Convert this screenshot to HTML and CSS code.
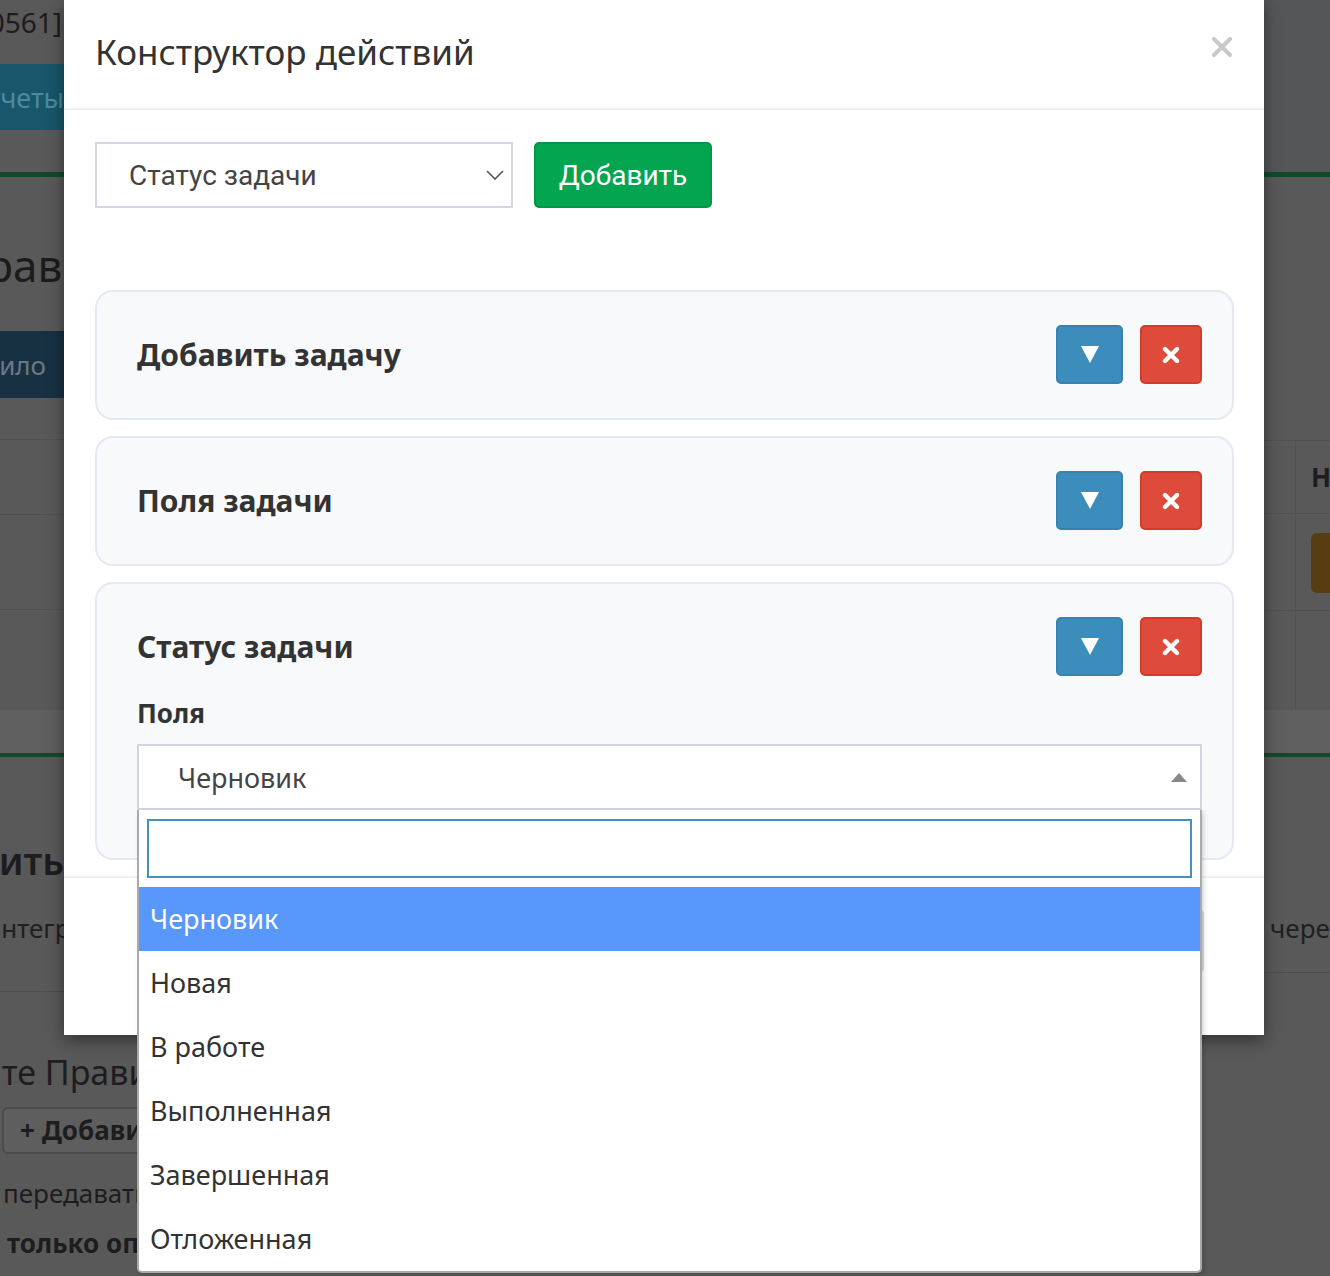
FILE: index.html
```html
<!DOCTYPE html>
<html lang="ru">
<head>
    <meta charset="UTF-8">
    <meta name="viewport" content="width=device-width, initial-scale=1.0">
    <title>Конструктор действий</title>
    <link rel="stylesheet" href="styles.css">
</head>
<body>
    <div class="page">
        <div class="side left">
            <div class="crumb cut">Задача [40561]</div>
            <div class="topnav"><div class="cut">Отчеты</div></div>
            <div class="green-rule"></div>
            <div class="page-title cut"><span>Правила</span></div>
            <div class="navy-btn"><div class="cut">Добавить правило</div></div>
            <div class="rows">
                <div class="row r1"></div>
                <div class="row r2"></div>
                <div class="row r3"></div>
                <div class="band"></div>
            </div>
            <div class="green-rule thin"></div>
            <div class="sub-title cut">Добавить</div>
            <div class="note"><span>интеграции</span></div>
            <div class="hr"></div>
            <div class="hint-title"><span>Настройте Правила</span></div>
            <div class="outline-btn">+ Добавить</div>
            <div class="small">передавать</div>
            <div class="small strong">только опубликованные</div>
        </div>
        <div class="side right">
            <div class="dark-top"></div>
            <div class="green-rule"></div>
            <div class="rtable">
                <div class="rrow head"><div class="cell"></div><div class="cell">Н</div></div>
                <div class="rrow tall"><div class="cell"></div><div class="cell"><span class="orange-btn"></span></div></div>
                <div class="rrow last"><div class="cell"></div><div class="cell"></div></div>
                <div class="band"></div>
            </div>
            <div class="green-rule thin"></div>
            <div class="note right-note">через</div>
            <div class="hr right-hr"></div>
        </div>
    </div>

    <div class="modal">
        <div class="modal-header">
            <h4 class="modal-title">Конструктор действий</h4>
            <span class="close">
                <svg width="20" height="20" viewBox="0 0 20 20"><path d="M2 2 L18 18 M18 2 L2 18" stroke="#c8c8c8" stroke-width="4" stroke-linecap="round"/></svg>
            </span>
        </div>
        <div class="modal-body">
            <div class="add-row">
                <div class="plain-select">
                    <span>Статус задачи</span>
                    <svg width="18" height="10" viewBox="0 0 18 10"><path d="M1 1 L9 9 L17 1" fill="none" stroke="#555" stroke-width="1.6"/></svg>
                </div>
                <button class="btn-add">Добавить</button>
            </div>

            <div class="actions">
                <div class="action-card">
                    <div class="card-head">
                        <span class="card-title">Добавить задачу</span>
                        <div class="card-tools">
                            <button class="tool blue"><svg width="18" height="17" viewBox="0 0 18 17"><polygon points="0,0 18,0 9,17" fill="#fff"/></svg></button>
                            <button class="tool red"><svg width="18" height="18" viewBox="0 0 18 18"><path d="M3 3 L15 15 M15 3 L3 15" stroke="#fff" stroke-width="4.4" stroke-linecap="round"/></svg></button>
                        </div>
                    </div>
                </div>
                <div class="action-card">
                    <div class="card-head">
                        <span class="card-title">Поля задачи</span>
                        <div class="card-tools">
                            <button class="tool blue"><svg width="18" height="17" viewBox="0 0 18 17"><polygon points="0,0 18,0 9,17" fill="#fff"/></svg></button>
                            <button class="tool red"><svg width="18" height="18" viewBox="0 0 18 18"><path d="M3 3 L15 15 M15 3 L3 15" stroke="#fff" stroke-width="4.4" stroke-linecap="round"/></svg></button>
                        </div>
                    </div>
                </div>
                <div class="action-card open">
                    <div class="card-head">
                        <span class="card-title">Статус задачи</span>
                        <div class="card-tools">
                            <button class="tool blue"><svg width="18" height="17" viewBox="0 0 18 17"><polygon points="0,0 18,0 9,17" fill="#fff"/></svg></button>
                            <button class="tool red"><svg width="18" height="18" viewBox="0 0 18 18"><path d="M3 3 L15 15 M15 3 L3 15" stroke="#fff" stroke-width="4.4" stroke-linecap="round"/></svg></button>
                        </div>
                    </div>
                    <div class="field-label">Поля</div>
                    <div class="s2">
                        <div class="s2-selection">
                            <span>Черновик</span>
                            <svg width="16" height="9" viewBox="0 0 16 9"><polygon points="0,9 16,9 8,0" fill="#888"/></svg>
                        </div>
                        <div class="s2-dropdown">
                            <div class="s2-search"><input type="text"></div>
                            <ul class="s2-results">
                                <li class="active">Черновик</li>
                                <li>Новая</li>
                                <li>В работе</li>
                                <li>Выполненная</li>
                                <li>Завершенная</li>
                                <li>Отложенная</li>
                            </ul>
                        </div>
                    </div>
                </div>
            </div>
        </div>
        <div class="modal-footer">
            <button class="btn-save">Сохранить</button>
        </div>
    </div>
</body>
</html>
```
FILE: styles.css
```css
*,
*:before,
*:after {
    margin: 0;
    padding: 0;
    box-sizing: border-box;
}

body {
    font-family: "Noto Sans", sans-serif;
    background-color: #595959;
    height: 1276px;
    overflow: hidden;
    color: #1d1d1f;
}

/* page behind the overlay */

.page {
    display: flex;
    justify-content: space-between;
}

.side {
    overflow: hidden;
}

.side.left {
    width: 140px;
}

.side.right {
    width: 66px;
}

.cut {
    width: 64px;
    display: flex;
    justify-content: flex-end;
    white-space: nowrap;
}

.crumb {
    height: 44px;
    align-items: center;
    font-size: 28px;
    padding-right: 2px;
}

.topnav {
    margin-top: 20px;
    height: 66px;
    background: #17566b;
    display: flex;
    align-items: center;
    color: #4b8b9e;
    font-size: 27px;
}

.green-rule {
    margin-top: 42px;
    height: 5px;
    background: #0f4b29;
}

.green-rule.thin {
    margin-top: 0;
    height: 4px;
}

.page-title {
    margin-top: 58px;
    font-size: 44px;
    line-height: 60px;
    color: #1b1b1b;
}

.page-title span {
    margin-right: -76px;
}

.navy-btn {
    margin-top: 36px;
    height: 67px;
    background: #173143;
    display: flex;
    align-items: center;
    color: #697985;
    font-size: 26px;
}

.navy-btn .cut {
    padding-right: 18px;
}

.rows {
    margin-top: 41px;
}

.row {
    border-top: 1px solid #515151;
}

.r1 { height: 75px; }
.r2 { height: 95px; }
.r3 { height: 101px; }

.band {
    height: 43px;
    background: #5f5f5f;
}

.sub-title {
    margin-top: 78px;
    font-size: 38px;
    line-height: 50px;
    font-weight: 600;
}

.note {
    margin-top: 25px;
    font-size: 26px;
    line-height: 36px;
    white-space: nowrap;
    color: #202022;
}

.note span {
    margin-left: -15px;
}

.hr {
    margin-top: 45px;
    border-top: 1px solid #4e4e4e;
}

.hint-title {
    margin-top: 57px;
    font-size: 34px;
    line-height: 46px;
    white-space: nowrap;
}

.hint-title span {
    margin-left: -137px;
}

.outline-btn {
    margin: 12px 0 0 2px;
    width: 200px;
    height: 47px;
    border: 2px solid #4c4c4c;
    border-radius: 6px;
    background: #5e5e5e;
    padding-left: 16px;
    font-size: 26px;
    line-height: 42px;
    font-weight: 700;
    white-space: nowrap;
}

.small {
    margin-top: 21px;
    padding-left: 3px;
    font-size: 26px;
    line-height: 36px;
    white-space: nowrap;
}

.small.strong {
    margin-top: 14px;
    padding-left: 7px;
    font-weight: 700;
}

.dark-top {
    height: 172px;
    margin-bottom: -42px;
    background: #555657;
}

.rtable {
    margin-top: 263px;
}

.rrow {
    display: flex;
    border-top: 1px solid #515151;
}

.rrow .cell:first-child {
    width: 32px;
    flex-shrink: 0;
    border-right: 1px solid #525252;
}

.rrow .cell:last-child {
    flex: 1;
    min-width: 0;
    padding-left: 15px;
}

.rrow.head {
    height: 73px;
    align-items: center;
    font-size: 26px;
    font-weight: 700;
}

.rrow.head .cell:first-child {
    align-self: stretch;
}

.rrow.tall {
    height: 97px;
}

.rrow.tall .cell:last-child {
    padding-top: 19px;
}

.orange-btn {
    display: block;
    width: 40px;
    height: 60px;
    border-radius: 6px;
    background: #583d12;
}

.rrow.last {
    height: 100px;
}

.right-note {
    margin-top: 153px;
    padding-left: 6px;
}

.right-hr {
    margin-top: 26px;
}

/* modal */

.modal {
    position: absolute;
    left: 64px;
    top: 0;
    width: 1200px;
    background: #fff;
    box-shadow: 0 5px 15px rgba(0, 0, 0, 0.45);
    color: #333;
}

.modal-header {
    height: 110px;
    border-bottom: 2px solid #eef0f3;
    padding: 0 32px 6px 31px;
    display: flex;
    align-items: center;
    justify-content: space-between;
}

.modal-title {
    font-size: 35px;
    font-weight: 400;
    color: #333;
}

.close {
    display: flex;
    margin-top: -8px;
}

.modal-body {
    padding: 32px 30px 16px 31px;
}

.add-row {
    display: flex;
    gap: 21px;
}

.plain-select {
    width: 418px;
    height: 66px;
    border: 2px solid #d3d7e1;
    display: flex;
    align-items: center;
    justify-content: space-between;
    padding: 0 7px 0 32px;
    font-family: Roboto, sans-serif;
    font-size: 28px;
    color: #444;
}

.btn-add {
    width: 178px;
    height: 66px;
    background: #03a551;
    border: 2px solid #029648;
    border-radius: 5px;
    color: #fff;
    font-family: Roboto, sans-serif;
    font-size: 28px;
}

.actions {
    margin-top: 82px;
    display: flex;
    flex-direction: column;
    gap: 16px;
}

.action-card {
    background: #f8f9fb;
    border: 2px solid #e6e9f1;
    border-radius: 18px;
    padding: 33px 30px 34px 40px;
}

.action-card.open {
    padding-bottom: 48px;
}

.card-head {
    display: flex;
    align-items: center;
    justify-content: space-between;
}

.card-title {
    font-size: 30px;
    font-weight: 700;
    color: #333;
}

.card-tools {
    display: flex;
    gap: 17px;
}

.tool {
    height: 59px;
    border-radius: 5px;
    display: flex;
    align-items: center;
    justify-content: center;
}

.tool.blue {
    width: 67px;
    background: #3d8dbc;
    border: 2px solid #3783b0;
}

.tool.red {
    width: 62px;
    background: #df4b3a;
    border: 2px solid #d53b29;
}

.field-label {
    margin-top: 19px;
    font-size: 26px;
    font-weight: 700;
    line-height: 36px;
}

.s2 {
    position: relative;
    margin-top: 13px;
}

.s2-selection {
    height: 66px;
    border: 2px solid #d0d5df;
    background: #fff;
    display: flex;
    align-items: center;
    justify-content: space-between;
    padding: 0 13px 0 39px;
    font-size: 27px;
    color: #444;
}

.s2-dropdown {
    position: absolute;
    top: 100%;
    left: 0;
    right: 0;
    background: #fff;
    border: 2px solid #aaa;
    border-top: 0;
    border-radius: 0 0 5px 5px;
    box-shadow: 2px 2px 4px rgba(0, 0, 0, 0.15);
    z-index: 2;
}

.s2-search {
    padding: 9px 8px;
}

.s2-search input {
    display: block;
    width: 100%;
    height: 59px;
    border: 2px solid #4690bd;
    outline: none;
}

.s2-results {
    list-style: none;
}

.s2-results li {
    height: 64px;
    line-height: 64px;
    padding-left: 11px;
    font-size: 27px;
    color: #333;
}

.s2-results li.active {
    background: #5897fb;
    color: #fff;
}

.modal-footer {
    border-top: 2px solid #eef0f3;
    padding: 30px 60px 61px 30px;
    display: flex;
    justify-content: flex-end;
}

.btn-save {
    width: 220px;
    height: 66px;
    background: #e8e8e8;
    border: 2px solid #dcdcdc;
    border-radius: 6px;
    font-size: 26px;
    color: #333;
}
```
